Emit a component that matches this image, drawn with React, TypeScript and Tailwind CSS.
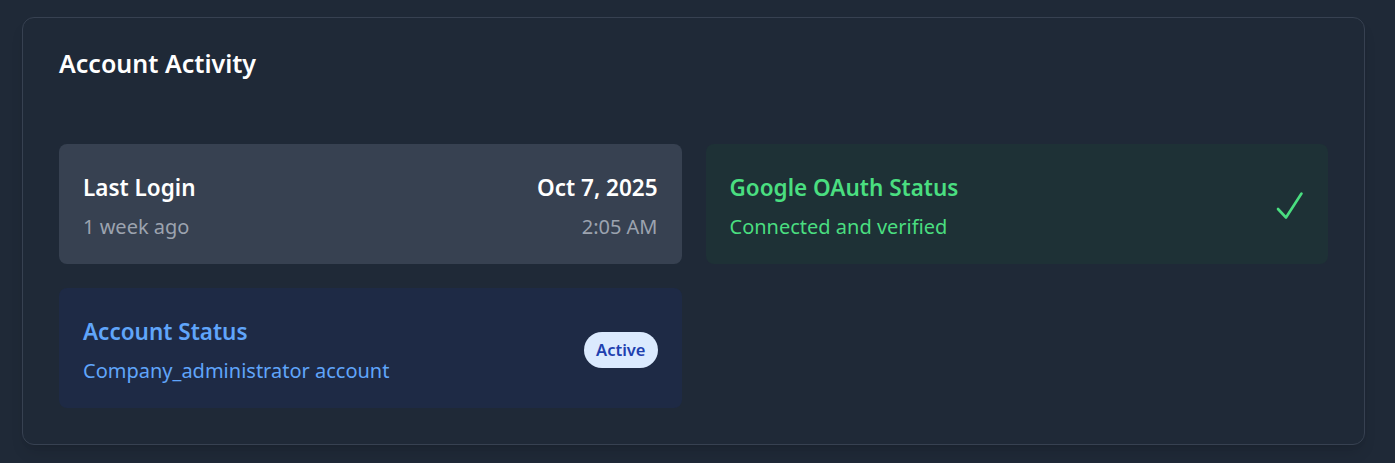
import React from "react";

function Check() {
  return (
    <svg width="28" height="30" viewBox="0 0 28 30" className="mt-[3px]" aria-hidden="true">
      <polyline
        points="2,18 10,26.5 25.5,2.5"
        fill="none"
        stroke="#4ade80"
        strokeWidth="2.6"
        strokeLinecap="round"
        strokeLinejoin="round"
      />
    </svg>
  );
}

export default function App() {
  return (
    <div
      className="min-h-screen w-full bg-[#1f2937] pl-[22px] pr-[30px] pt-[17px]"
      style={{ fontFamily: '"Noto Sans", "Open Sans", sans-serif' }}
    >
      <div className="rounded-xl border border-[#374151] bg-[#1f2937] px-9 pb-9 pt-[29px] shadow-lg">
        <h2 className="text-[25px] font-semibold leading-8 text-white">Account Activity</h2>
        <div className="mt-[65px] grid grid-cols-2 gap-6">
          <div className="flex h-[120px] items-center justify-between rounded-lg bg-[#374151] px-6">
            <div className="flex flex-col gap-[11px] pt-[7px]">
              <span className="text-[22.5px] font-semibold leading-7 text-white">Last Login</span>
              <span className="text-[20px] leading-7 text-[#9ca3af]">1 week ago</span>
            </div>
            <div className="flex flex-col items-end gap-[11px] pt-[7px]">
              <span className="text-[22.5px] font-semibold leading-7 text-white">Oct 7, 2025</span>
              <span className="text-[20px] leading-7 text-[#9ca3af]">2:05 AM</span>
            </div>
          </div>
          <div className="flex h-[120px] items-center justify-between rounded-lg bg-[#1e3136] px-6">
            <div className="flex flex-col gap-[11px] pt-[7px]">
              <span className="text-[22.5px] font-semibold leading-7 text-[#4ade80]">Google OAuth Status</span>
              <span className="text-[20px] leading-7 text-[#4ade80]">Connected and verified</span>
            </div>
            <Check />
          </div>
          <div className="flex h-[120px] items-center justify-between rounded-lg bg-[#1e2a45] px-6">
            <div className="flex flex-col gap-[11px] pt-[7px]">
              <span className="text-[22.5px] font-semibold leading-7 text-[#60a5fa]">Account Status</span>
              <span className="text-[20px] leading-7 text-[#60a5fa]">Company_administrator account</span>
            </div>
            <span className="mt-[4px] rounded-full bg-[#dbeafe] px-3 py-1.5 text-[16.5px] font-semibold leading-6 text-[#1e40af]">
              Active
            </span>
          </div>
        </div>
      </div>
    </div>
  );
}
